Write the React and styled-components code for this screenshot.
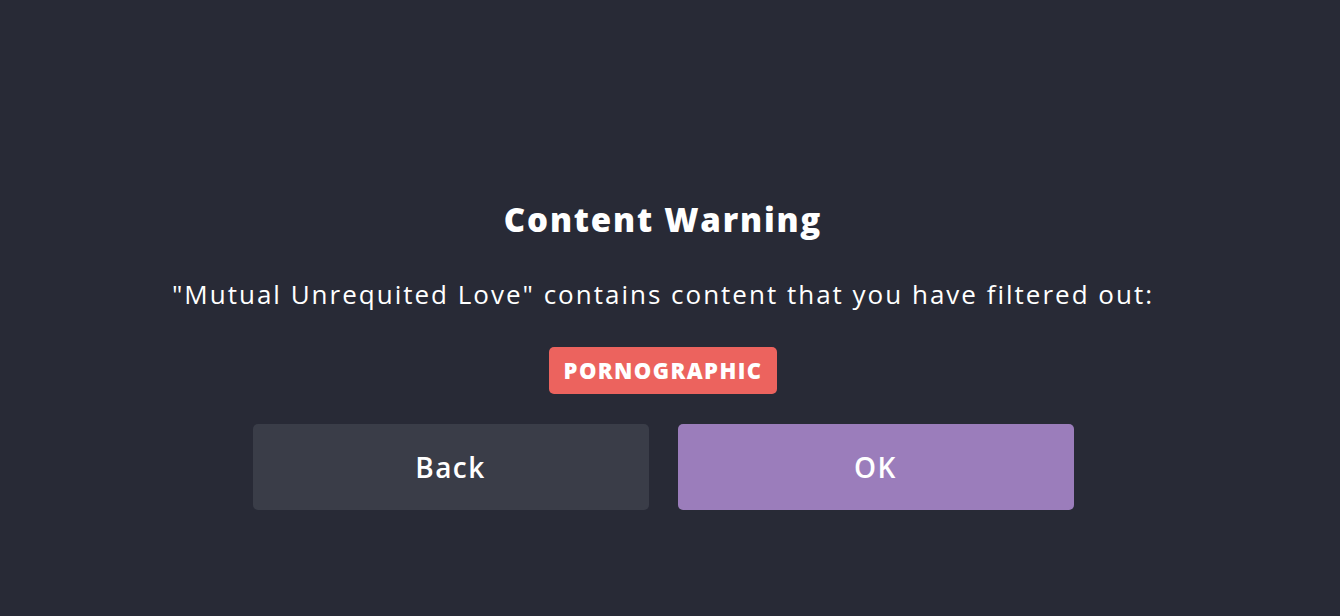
import React from 'react';
import styled, { createGlobalStyle } from 'styled-components';

const GlobalStyle = createGlobalStyle`
    html, body {
        margin: 0;
        padding: 0;
        background: #282a36;
    }
    body {
        font-family: "Open Sans", "Noto Sans", sans-serif;
        color: #ffffff;
    }
`;

const Page = styled.div`
    width: 100%;
    height: 616px;
    box-sizing: border-box;
    padding: 196px 14px 0 0;
    display: flex;
    flex-direction: column;
    align-items: center;
    background: #282a36;
`;

const Title = styled.h1`
    margin: 0;
    font-size: 33px;
    line-height: 48px;
    font-weight: 800;
    letter-spacing: 1.8px;
`;

const Message = styled.p`
    margin: 32px 0 0;
    font-size: 26px;
    line-height: 36px;
    font-weight: 400;
    letter-spacing: 2px;
`;

const Tags = styled.div`
    display: flex;
    gap: 8px;
    margin-top: 35px;
`;

const Tag = styled.span`
    display: inline-block;
    padding: 0 15px;
    height: 47px;
    line-height: 47px;
    border-radius: 5px;
    background: #ec635e;
    font-size: 22px;
    font-weight: 800;
    letter-spacing: 1.4px;
`;

const Actions = styled.div`
    display: flex;
    gap: 29px;
    margin-top: 30px;
`;

const Button = styled.button`
    width: 396px;
    height: 86px;
    border: none;
    border-radius: 5px;
    background: ${(p) => (p.$primary ? '#9b7dbb' : '#3a3d48')};
    color: #ffffff;
    font-family: "Open Sans", "Noto Sans", sans-serif;
    font-size: 28px;
    font-weight: 600;
    letter-spacing: 1.5px;
    cursor: pointer;
`;

const App = () => {
    return (
        <>
            <GlobalStyle />
            <Page>
                <Title>Content Warning</Title>
                <Message>"Mutual Unrequited Love" contains content that you have filtered out:</Message>
                <Tags>
                    <Tag>PORNOGRAPHIC</Tag>
                </Tags>
                <Actions>
                    <Button>Back</Button>
                    <Button $primary>OK</Button>
                </Actions>
            </Page>
        </>
    );
};

export default App;
